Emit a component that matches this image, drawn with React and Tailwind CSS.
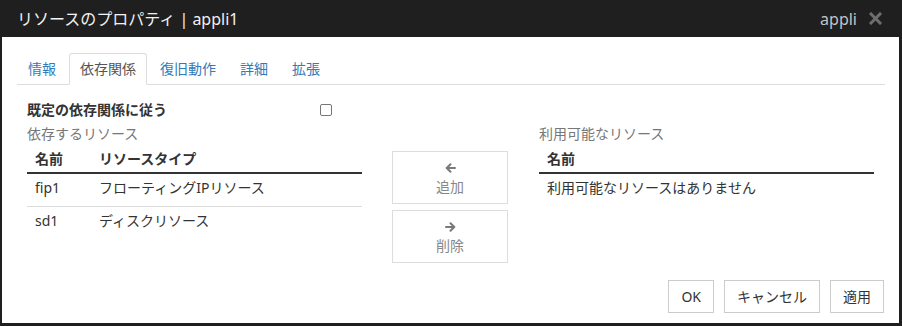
import React from "react";

const font = { fontFamily: '"Noto Sans", "Noto Sans CJK JP", sans-serif' };

function ArrowLeft() {
  return (
    <svg width="11" height="10" viewBox="0 0 11 10" className="block">
      <path d="M10 5H2M5.5 1.2L1.7 5l3.8 3.8" fill="none" stroke="#7a7a7a" strokeWidth="2" strokeLinecap="round" strokeLinejoin="round" />
    </svg>
  );
}
function ArrowRight() {
  return (
    <svg width="11" height="10" viewBox="0 0 11 10" className="block">
      <path d="M1 5h8M5.5 1.2L9.3 5 5.5 8.8" fill="none" stroke="#7a7a7a" strokeWidth="2" strokeLinecap="round" strokeLinejoin="round" />
    </svg>
  );
}

export default function App() {
  const tabs = ["情報", "依存関係", "復旧動作", "詳細", "拡張"];
  return (
    <div className="w-[902px] h-[326px] bg-[#1f1f1f] flex flex-col overflow-hidden" style={font}>
      <div className="h-[37px] flex items-center justify-between pl-[17px] pr-[20px] shrink-0">
        <div className="text-[16px] text-[#f2f2f2] leading-[20px]">リソースのプロパティ | appli1</div>
        <div className="flex items-center gap-[12px]">
          <span className="text-[16px] text-[#c4c4c4] leading-[20px]">appli</span>
          <svg width="13" height="13" viewBox="0 0 13 13" className="block">
            <path d="M2 2l9 9M11 2l-9 9" stroke="#6e6e6e" strokeWidth="3" strokeLinecap="square" />
          </svg>
        </div>
      </div>
      <div className="ml-[2px] mr-[3px] h-[286px] bg-white flex flex-col pl-[15px] pr-[14px] text-[14px] leading-[20px] text-[#333]">
        <div className="mt-[16px] flex border-b border-[#dddddd] h-[32px]">
          {tabs.map((t, i) =>
            i === 1 ? (
              <div key={t} className="mr-[2px] px-[10px] pt-[5px] pb-[6px] border border-[#dddddd] border-b-white rounded-t-[3px] text-[#555] bg-white h-[32px]">
                {t}
              </div>
            ) : (
              <div key={t} className="mr-[2px] px-[10px] pt-[5px] pb-[5px] border border-transparent text-[#337ab7]">
                {t}
              </div>
            )
          )}
        </div>
        <div className="pl-[10px] pr-[11px]">
          <div className="mt-[15px] flex items-center h-[20px]">
            <div className="w-[293px] font-bold text-[#333]">既定の依存関係に従う</div>
            <div className="w-[12px] h-[12px] border border-[#767676] rounded-[2px] -mt-[1px]"></div>
          </div>
          <div className="mt-[4px] flex items-start">
            <div className="w-[335px]">
              <div className="text-[#777]">依存するリソース</div>
              <div className="flex border-b-2 border-[#333] pt-[5px] pb-[3px] font-bold">
                <div className="w-[72px] pl-[8px]">名前</div>
                <div>リソースタイプ</div>
              </div>
              <div className="flex border-b border-[#dddddd] pt-[4px] pb-[8px]">
                <div className="w-[72px] pl-[8px]">fip1</div>
                <div>フローティングIPリソース</div>
              </div>
              <div className="flex pt-[4px] pb-[8px]">
                <div className="w-[72px] pl-[8px]">sd1</div>
                <div>ディスクリソース</div>
              </div>
            </div>
            <div className="w-[116px] ml-[30px] mt-[27px] flex flex-col gap-[6px]">
              <div className="h-[53px] border border-[#dddddd] flex flex-col items-center pt-[11px] text-[#888]">
                <ArrowLeft />
                <div className="mt-[4px]">追加</div>
              </div>
              <div className="h-[53px] border border-[#dddddd] flex flex-col items-center pt-[11px] text-[#888]">
                <ArrowRight />
                <div className="mt-[4px]">削除</div>
              </div>
            </div>
            <div className="w-[335px] ml-[31px]">
              <div className="text-[#777]">利用可能なリソース</div>
              <div className="flex border-b-2 border-[#333] pt-[5px] pb-[3px] font-bold">
                <div className="pl-[8px]">名前</div>
              </div>
              <div className="flex pt-[4px] pb-[8px]">
                <div className="pl-[8px]">利用可能なリソースはありません</div>
              </div>
            </div>
          </div>
        </div>
        <div className="mt-auto mb-[10px] flex justify-end gap-[10px] pr-[1px]">
          <div className="h-[33px] px-[12px] border border-[#cccccc] flex items-center">OK</div>
          <div className="h-[33px] px-[12px] border border-[#cccccc] flex items-center">キャンセル</div>
          <div className="h-[33px] px-[12px] border border-[#cccccc] flex items-center">適用</div>
        </div>
      </div>
    </div>
  );
}
